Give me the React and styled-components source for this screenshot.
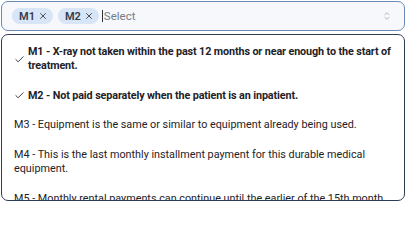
import styled, { createGlobalStyle } from "styled-components";
import { Check, X, ChevronsUpDown } from "lucide-react";

const GlobalStyle = createGlobalStyle`
  html, body {
    margin: 0;
    padding: 0;
    background: #ffffff;
    font-family: Roboto, "Liberation Sans", sans-serif;
  }
`;

const Page = styled.div`
  padding: 1px;
  display: flex;
  flex-direction: column;
  gap: 3px;
`;

const Control = styled.div`
  box-sizing: border-box;
  height: 30px;
  display: flex;
  align-items: center;
  gap: 5px;
  padding: 0 12px 0 10px;
  border: 1.5px solid #6a8cb8;
  border-radius: 7px;
  background: #f6f8fc;
`;

const Chip = styled.span`
  display: inline-flex;
  align-items: center;
  gap: 3px;
  height: 16px;
  padding: 0 5px 0 7px;
  border-radius: 8px;
  background: #d7e5f7;
  color: #343b49;
  font-size: 11px;
  font-weight: 600;
  svg {
    color: #3c4452;
  }
`;

const Placeholder = styled.span`
  flex: 1;
  position: relative;
  margin-left: -2px;
  padding-left: 2px;
  font-size: 11.5px;
  line-height: 14px;
  color: #757c86;
  &::before {
    content: "";
    position: absolute;
    left: 0;
    top: 1px;
    bottom: 1px;
    width: 1px;
    background: #2b2f36;
  }
`;

const Toggle = styled.span`
  display: flex;
  color: #9aa2ad;
`;

const Listbox = styled.ul`
  box-sizing: border-box;
  height: 167px;
  margin: 0;
  padding: 2px 0 0;
  list-style: none;
  overflow: hidden;
  background: #ffffff;
  border: 1px solid #2e3d56;
  border-radius: 7px;
`;

const Option = styled.li`
  display: flex;
  align-items: center;
  gap: 3px;
  padding: 7.5px 6px 7.5px 12px;
  font-size: 10.8px;
  line-height: 14.5px;
  color: #1e2227;
  font-weight: ${(p) => (p.$selected ? 700 : 400)};
  letter-spacing: ${(p) => (p.$selected ? "-0.12px" : "0")};
  svg {
    flex-shrink: 0;
    color: #2a2f36;
  }
`;

const options = [
  { code: "M1", text: "X-ray not taken within the past 12 months or near enough to the start of treatment.", selected: true },
  { code: "M2", text: "Not paid separately when the patient is an inpatient.", selected: true },
  { code: "M3", text: "Equipment is the same or similar to equipment already being used." },
  { code: "M4", text: "This is the last monthly installment payment for this durable medical equipment." },
  { code: "M5", text: "Monthly rental payments can continue until the earlier of the 15th month from the first rental month, or the month when the equipment is no longer needed." },
];

export default function App() {
  return (
    <Page>
      <GlobalStyle />
      <Control>
        <Chip>
          M1 <X size={10} strokeWidth={2.2} />
        </Chip>
        <Chip>
          M2 <X size={10} strokeWidth={2.2} />
        </Chip>
        <Placeholder>Select</Placeholder>
        <Toggle>
          <ChevronsUpDown size={10} strokeWidth={1.8} />
        </Toggle>
      </Control>
      <Listbox>
        {options.map((o) => (
          <Option key={o.code} $selected={o.selected}>
            {o.selected && <Check size={11} strokeWidth={2} />}
            <span>
              {o.code} - {o.text}
            </span>
          </Option>
        ))}
      </Listbox>
    </Page>
  );
}
